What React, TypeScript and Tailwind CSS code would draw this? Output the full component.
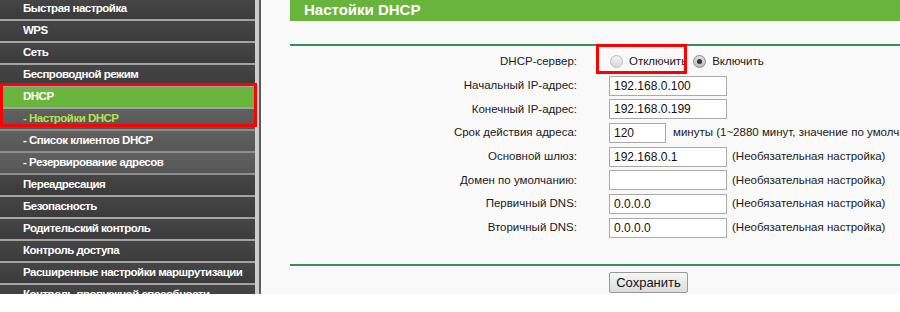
import React from 'react';

type MenuItem = { label: string; sub?: boolean; active?: boolean };

const menu: MenuItem[] = [
  { label: 'Быстрая настройка' },
  { label: 'WPS' },
  { label: 'Сеть' },
  { label: 'Беспроводной режим' },
  { label: 'DHCP', active: true },
  { label: 'Настройки DHCP', sub: true, active: true },
  { label: 'Список клиентов DHCP', sub: true },
  { label: 'Резервирование адресов', sub: true },
  { label: 'Переадресация' },
  { label: 'Безопасность' },
  { label: 'Родительский контроль' },
  { label: 'Контроль доступа' },
  { label: 'Расширенные настройки маршрутизации' },
  { label: 'Контроль пропускной способности' },
];

const MenuRow = ({ item }: { item: MenuItem }) => {
  let bg = 'bg-gradient-to-b from-[#454545] to-[#3b3b3b] border-[#a3a3a3]';
  if (item.sub) bg = 'bg-gradient-to-b from-[#606060] to-[#565656] border-[#8f8f8f]';
  if (item.active && !item.sub) bg = 'bg-[#6ab53d] border-[#a3a3a3]';
  const color = item.sub && item.active ? 'text-[#b6e24c]' : 'text-white';
  return (
    <div className={`h-[22px] shrink-0 border-b-2 flex items-center pl-[23px] whitespace-nowrap ${bg}`}>
      <span className={`text-[11.5px] font-bold tracking-[-0.5px] ${color}`}>
        {item.sub ? '- ' : ''}
        {item.label}
      </span>
    </div>
  );
};

const Radio = ({ checked }: { checked?: boolean }) => (
  <span
    className={`w-[13px] h-[13px] rounded-full border flex items-center justify-center shrink-0 ${
      checked
        ? 'border-[#8c8c8c] bg-gradient-to-b from-[#dedede] to-[#bdbdbd]'
        : 'border-[#bcbcbc] bg-gradient-to-b from-[#f4f4f4] to-[#d9d9d9]'
    }`}
  >
    {checked && <span className="w-[5px] h-[5px] rounded-full bg-[#333]" />}
  </span>
);

const Field = ({ value, w = 'w-[118px]' }: { value: string; w?: string }) => (
  <input
    readOnly
    value={value}
    className={`${w} h-[20px] border border-[#aaaaaa] bg-white text-[12px] text-[#111] pl-[4px] outline-none`}
  />
);

const Optional = () => (
  <span className="ml-[5px] text-[11.5px] text-[#1a1a1a] whitespace-nowrap">(Необязательная настройка)</span>
);

const FormRow = ({ label, children }: { label: string; children: React.ReactNode }) => (
  <div className="h-[23.7px] flex items-center">
    <div className="w-[316px] shrink-0 text-right text-[11.5px] text-[#1a1a1a]">{label}</div>
    <div className="ml-[32px] flex items-center whitespace-nowrap">{children}</div>
  </div>
);

export default function App() {
  return (
    <div className="w-[900px] h-[312px] bg-white overflow-hidden font-['Liberation_Sans',Arial,sans-serif]">
      <div className="relative h-[294px] flex">
        {/* left menu */}
        <div className="w-[255px] shrink-0 overflow-hidden flex flex-col bg-[#3d3d3d]">
          <div className="-mt-[1px] flex flex-col">
            {menu.map((item) => (
              <MenuRow key={item.label} item={item} />
            ))}
          </div>
        </div>
        <div className="w-[4px] shrink-0 bg-[#cdcdcd]" />
        <div className="w-[2px] shrink-0 bg-[#5c5c5c]" />

        {/* content */}
        <div className="relative flex-1 bg-[#f9f9f9] overflow-hidden">
          <div className="ml-[29px] h-[21px] bg-[#68b43c] flex items-center pl-[14px]">
            <span className="text-[15px] font-bold text-white">Настойки DHCP</span>
          </div>
          <div className="ml-[29px] mt-[23px] h-[2px] bg-[#3b8c5d]" />

          <div className="mt-[4px] flex flex-col">
            <FormRow label="DHCP-сервер:">
              <span className="ml-[1px]">
                <Radio />
              </span>
              <span className="ml-[6px] text-[11.5px] text-[#1a1a1a]">Отключить</span>
              <span className="ml-[6px]">
                <Radio checked />
              </span>
              <span className="ml-[6px] text-[11.5px] text-[#1a1a1a]">Включить</span>
            </FormRow>
            <FormRow label="Начальный IP-адрес:">
              <Field value="192.168.0.100" />
            </FormRow>
            <FormRow label="Конечный IP-адрес:">
              <Field value="192.168.0.199" />
            </FormRow>
            <FormRow label="Срок действия адреса:">
              <Field value="120" w="w-[57px]" />
              <span className="ml-[7px] text-[11.5px] text-[#1a1a1a]">
                минуты (1~2880 минут, значение по умолчанию: 120)
              </span>
            </FormRow>
            <FormRow label="Основной шлюз:">
              <Field value="192.168.0.1" />
              <Optional />
            </FormRow>
            <FormRow label="Домен по умолчанию:">
              <Field value="" />
              <Optional />
            </FormRow>
            <FormRow label="Первичный DNS:">
              <Field value="0.0.0.0" />
              <Optional />
            </FormRow>
            <FormRow label="Вторичный DNS:">
              <Field value="0.0.0.0" />
              <Optional />
            </FormRow>
          </div>

          <div className="ml-[29px] mt-[24px] h-[2px] bg-[#3b8c5d]" />
          <button className="ml-[348px] mt-[6px] w-[79px] h-[21px] border border-[#9a9a9a] rounded-[2px] bg-gradient-to-b from-[#f7f7f7] to-[#dcdcdc] text-[13px] text-[#111] leading-none">
            Сохранить
          </button>

          {/* highlight around the "off" option */}
          <div className="absolute left-[335px] top-[44px] w-[91px] h-[30px] border-[3px] border-[#f00] pointer-events-none" />
        </div>

        {/* highlight around DHCP menu */}
        <div className="absolute left-0 top-[83px] w-[257px] h-[44px] border-[3px] border-[#f00] pointer-events-none" />
      </div>
    </div>
  );
}
